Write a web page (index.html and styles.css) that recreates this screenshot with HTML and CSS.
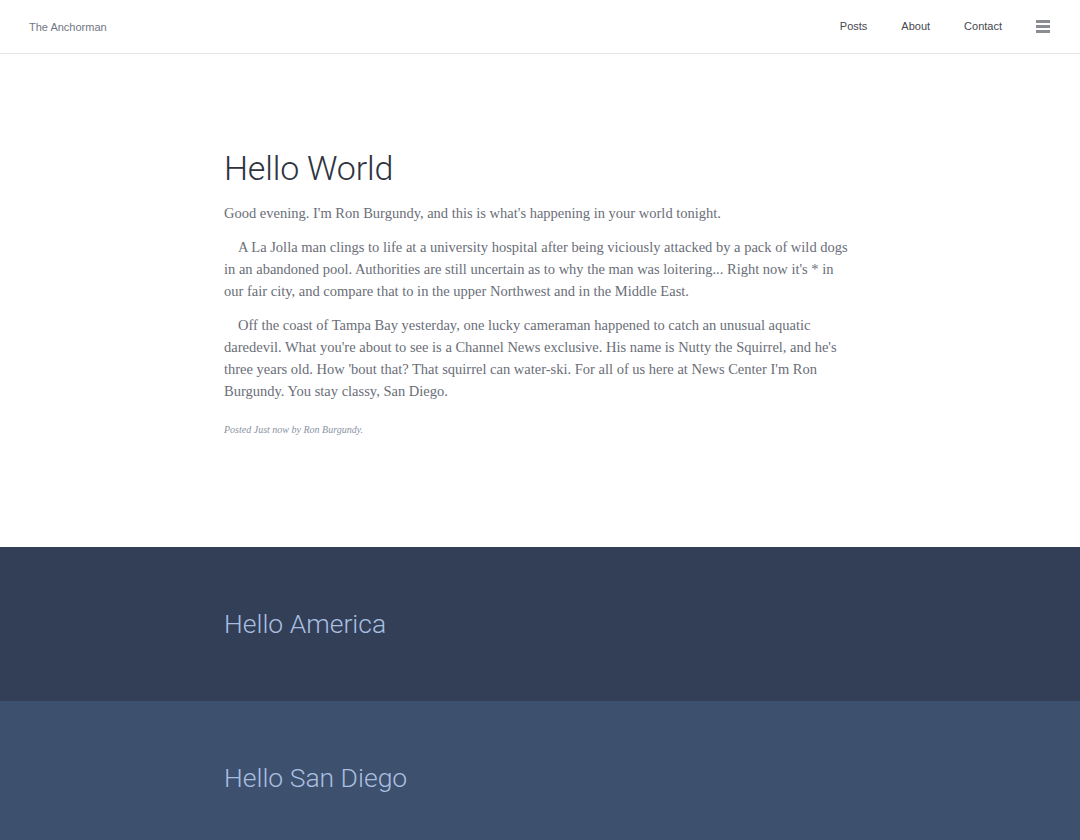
FILE: index.html
```html
<!DOCTYPE html>
<html>
<head>
<meta charset="utf-8">
<link rel="stylesheet" href="styles.css">
</head>
<body>
<header class="topbar">
  <a class="brand" href="#">The Anchorman</a>
  <nav class="nav">
    <a href="#">Posts</a>
    <a href="#">About</a>
    <a href="#">Contact</a>
    <span class="burger"><i></i><i></i><i></i></span>
  </nav>
</header>
<main>
  <section class="post">
    <div class="wrap">
      <h1>Hello World</h1>
      <p>Good evening. I'm Ron Burgundy, and this is what's happening in your world tonight.</p>
      <p class="indent">A La Jolla man clings to life at a university hospital after being viciously attacked by a pack of wild dogs in an abandoned pool. Authorities are still uncertain as to why the man was loitering... Right now it's * in our fair city, and compare that to in the upper Northwest and in the Middle East.</p>
      <p class="indent">Off the coast of Tampa Bay yesterday, one lucky cameraman happened to catch an unusual aquatic daredevil. What you're about to see is a Channel News exclusive. His name is Nutty the Squirrel, and he's three years old. How 'bout that? That squirrel can water-ski. For all of us here at News Center I'm Ron Burgundy. You stay classy, San Diego.</p>
      <p class="meta">Posted Just now by Ron Burgundy.</p>
    </div>
  </section>
  <section class="band band-dark">
    <div class="wrap"><h2>Hello America</h2></div>
  </section>
  <section class="band band-mid">
    <div class="wrap"><h2>Hello San Diego</h2></div>
  </section>
</main>
</body>
</html>
```

FILE: styles.css
```css
html, body {
  margin: 0;
  padding: 0;
  background: #fff;
}
body {
  font-family: "Liberation Serif", serif;
}
a { text-decoration: none; }

.topbar {
  height: 53px;
  border-bottom: 1px solid #e4e4e6;
  display: flex;
  align-items: center;
  justify-content: space-between;
  padding: 0 29px;
  font-family: "Liberation Sans", Arial, sans-serif;
}
.brand {
  font-size: 11px;
  color: #6f7784;
}
.nav {
  display: flex;
  align-items: center;
  margin-top: -1px;
}
.nav a {
  font-size: 11px;
  color: #45484f;
  margin-left: 34px;
}
.burger {
  display: flex;
  flex-direction: column;
  gap: 2px;
  margin-left: 34px;
  width: 14px;
  margin-right: 1px;
}
.burger i {
  display: block;
  height: 3px;
  background: #8a8d93;
}

.wrap {
  width: 632px;
  margin: 0 auto;
}
.post {
  padding: 92px 0 109px;
}
h1 {
  font-family: Roboto, "Liberation Sans", sans-serif;
  font-weight: 300;
  font-size: 34px;
  line-height: 44px;
  color: #2e3340;
  margin: 0 0 12px;
  letter-spacing: -0.2px;
}
.post p {
  font-size: 14.5px;
  line-height: 22px;
  color: #6a6e78;
  margin: 0 0 12px;
}
.post p.indent {
  text-indent: 14px;
}
.post p.meta {
  font-size: 10px;
  font-style: italic;
  color: #8a93a3;
  margin: 20px 0 0;
  line-height: 16px;
}

.band {
  padding: 58px 0 58px;
}
.band-dark { background: #323f57; }
.band-mid { background: #3d506d; }
h2 {
  font-family: Roboto, "Liberation Sans", sans-serif;
  font-weight: 300;
  font-size: 26.5px;
  line-height: 38px;
  color: #a9bee0;
  margin: 0;
}
```
